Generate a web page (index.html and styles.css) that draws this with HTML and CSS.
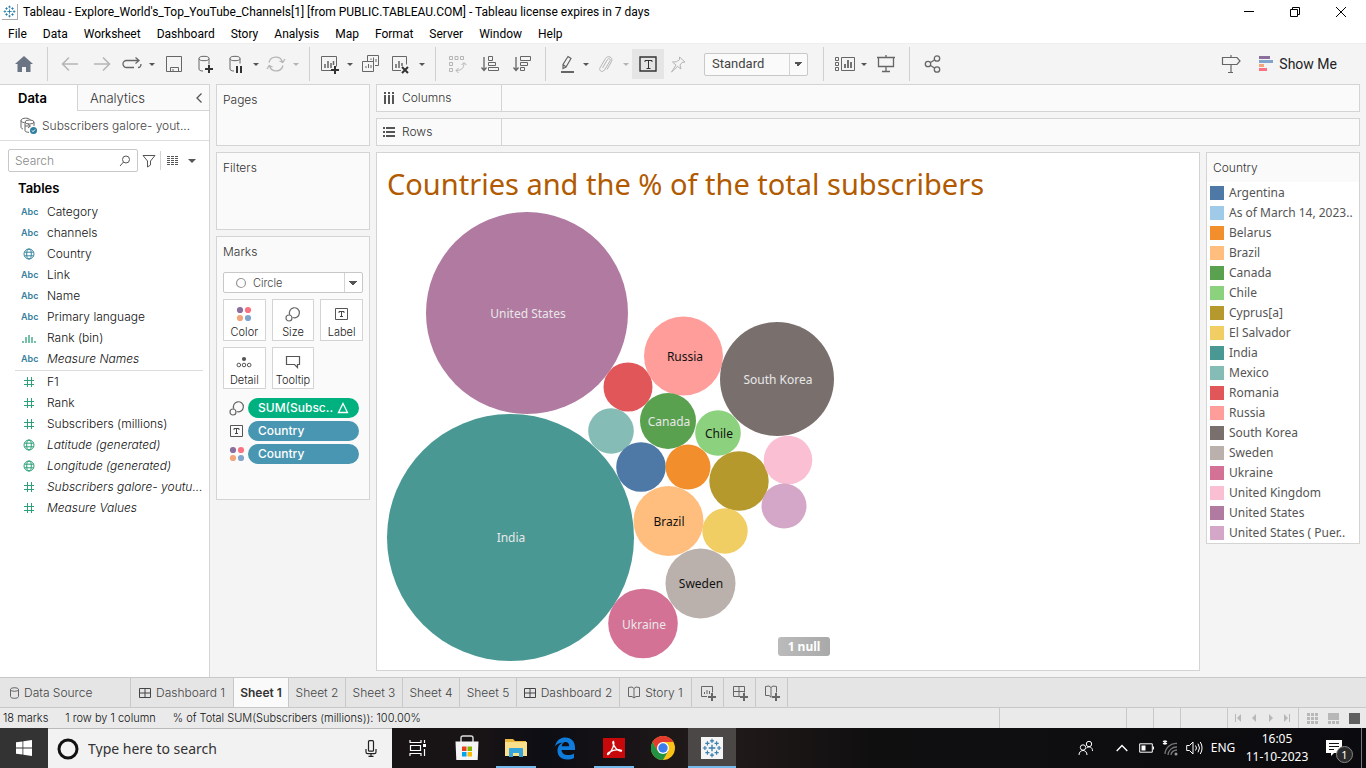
FILE: index.html
```html
<!DOCTYPE html>
<html lang="en">
<head>
<meta charset="utf-8">
<meta name="viewport" content="width=device-width, initial-scale=1">
<title>Tableau - Explore_World's_Top_YouTube_Channels[1]</title>
<link rel="stylesheet" href="styles.css">
</head>
<body>
<svg class="sprite" aria-hidden="true">
  <symbol id="i-tableau" viewBox="0 0 24 24"><g fill="none" stroke="currentColor"><path stroke-width="1.6" d="M12 8v8M8 12h8"/><path stroke-width="1.4" d="M12 1v5M9.5 3.5h5M12 18v5M9.5 20.500h5M3.500 9.500v5M1 12h5M20.500 9.500v5M18 12h5M6.500 4v5M4 6.500h5M17.500 4v5M15 6.500h5M6.500 15v5M4 17.500h5M17.500 15v5M15 17.500h5"/></g></symbol>
  <symbol id="i-globe" viewBox="0 0 12 12"><g fill="none" stroke="currentColor"><circle cx="6" cy="6" r="5"/><ellipse cx="6" cy="6" rx="2.300" ry="5"/><path d="M1.500 4.200h9M1.500 7.800h9"/></g></symbol>
  <symbol id="i-hash" viewBox="0 0 12 12"><path fill="none" stroke="currentColor" d="M4.500 1v10M8.500 1v10M1 4.500h10M1 8.500h10"/></symbol>
  <symbol id="i-bin" viewBox="0 0 14 12"><path fill="none" stroke="currentColor" stroke-width="1.300" d="M1 9v2M4 5v6M7 3v8M10 5v6M13 9v2"/></symbol>
  <symbol id="i-size" viewBox="0 0 16 16"><g fill="none" stroke="#666" stroke-width="1.200"><path d="M4.800 8.800a5 5 0 1 1 3 2.700"/><circle cx="4" cy="12" r="3"/></g></symbol>
  <symbol id="i-label" viewBox="0 0 16 16"><path fill="none" stroke="#555" d="M1.500 2.500h12v11h-12z"/><path fill="none" stroke="#444" d="M5 7V5.500h5V7M7.500 5.500v5M6 10.500h3"/></symbol>
  <symbol id="i-color" viewBox="0 0 16 16"><circle cx="4" cy="4" r="3.100" fill="#8b6f9c"/><circle cx="12" cy="4" r="3.100" fill="#fb7383"/><circle cx="4" cy="12" r="3.100" fill="#f3a67b"/><circle cx="12" cy="12" r="3.100" fill="#82a5cd"/></symbol>
  <symbol id="i-dash" viewBox="0 0 12 12"><path fill="none" stroke="currentColor" d="M.5 1.500h11v9H.5zM6 1.500v9M.5 6h11"/></symbol>
</svg>

<header class="titlebar">
  <svg class="app-icon" viewBox="0 0 24 24"><use href="#i-tableau"/></svg>
  <span class="titlebar-text">Tableau - Explore_World's_Top_YouTube_Channels[1] [from PUBLIC.TABLEAU.COM] - Tableau license expires in 7 days</span>
  <div class="window-controls">
    <button aria-label="Minimize"><svg width="12" height="12"><path d="M1 5.500h10"/></svg></button>
    <button aria-label="Restore"><svg width="12" height="12"><path d="M1.500 3.500h7v7h-7zM3.500 3.500v-2h7v7h-2"/></svg></button>
    <button aria-label="Close"><svg width="12" height="12"><path d="M1 1l10 10M11 1L1 11"/></svg></button>
  </div>
</header>

<nav class="menubar" aria-label="Main menu">
  <button>File</button><button>Data</button><button>Worksheet</button><button>Dashboard</button><button>Story</button><button>Analysis</button><button>Map</button><button>Format</button><button>Server</button><button>Window</button><button>Help</button>
</nav>

<div class="toolbar" role="toolbar" aria-label="Toolbar">
  <button class="tool" aria-label="Start page"><svg viewBox="0 0 24 24"><path fill="#6b7482" stroke="none" d="M12 4l9 8h-2.500v8H14v-5h-4v5H5.500v-8H3z"/></svg></button>
  <span class="sep"></span>
  <button class="tool off" aria-label="Undo"><svg viewBox="0 0 24 24"><path stroke-width="1.500" d="M5 12h15M11 5.500L4.500 12l6.500 6.500"/></svg></button>
  <button class="tool off" aria-label="Redo"><svg viewBox="0 0 24 24"><path stroke-width="1.500" d="M4 12h15M13 5.500l6.500 6.500-6.500 6.500"/></svg></button>
  <button class="tool narrow" aria-label="Replay"><svg viewBox="0 0 24 24"><path stroke-width="1.300" d="M14 15.500H6.500a3.200 3.200 0 0 1 0-7H18M18 15.500c2 0 3-1.500 3-3.500M15.500 5.500l3.500 3-3.500 3"/></svg></button>
  <button class="caret" aria-label="Replay options"></button>
  <button class="tool" aria-label="Save"><svg viewBox="0 0 24 24"><path d="M4.500 4.500h15v15h-15zM8.500 19.500v-4h8v4M11 17v2"/></svg></button>
  <button class="tool" aria-label="New data source"><svg viewBox="0 0 24 24"><ellipse cx="10" cy="6.500" rx="5" ry="2.200"/><path d="M5 6.500v10.500c0 1.200 1.500 2 4 2M15 6.500v6"/><path class="heavy" d="M15 13v8M11 17h8"/></svg></button>
  <button class="tool narrow" aria-label="Pause updates"><svg viewBox="0 0 24 24"><ellipse cx="11" cy="6.500" rx="5" ry="2.200"/><path d="M6 6.500v10.500c0 1.200 1.500 2 4 2M16 6.500v5"/><path class="heavy" d="M13 14v7M17 14v7"/></svg></button>
  <button class="caret" aria-label="Pause options"></button>
  <button class="tool narrow off" aria-label="Run update"><svg viewBox="0 0 24 24"><path stroke-width="1.300" d="M5 10.500a7 7 0 0 1 13.500-.5M19 13.500a7 7 0 0 1-13.500.5M21 7l-2.200 3.500L15.500 9M3 17l2.200-3.500L8.500 15"/></svg></button>
  <button class="caret off" aria-label="Update options"></button>
  <span class="sep"></span>
  <button class="tool narrow" aria-label="New worksheet"><svg viewBox="0 0 24 24"><path d="M13 18.500H3.500v-14h15v10"/><path stroke-width="1.500" d="M7 12v4M10 9v7M13 11v5M15.500 9v4"/><path class="heavy" d="M17 14v8M13 18h8"/></svg></button>
  <button class="caret" aria-label="New options"></button>
  <button class="tool narrow" aria-label="Duplicate"><svg viewBox="0 0 24 24"><path d="M9.500 9V3.500h11v10H17M4.500 9.500h11v10h-11zM13 8V6.500M15.500 10V5.500M18 10V7M8 16v-2M10.500 16v-4M13 16v-3"/></svg></button>
  <button class="tool" aria-label="Clear sheet"><svg viewBox="0 0 24 24"><path d="M13 18.500H4.500v-14h14v8"/><path stroke-width="1.500" d="M8 12v4M11 9v7M14 11v3"/><path class="heavy" d="M14 15l6 6M20 15l-6 6"/></svg></button>
  <button class="caret" aria-label="Clear options"></button>
  <span class="sep"></span>
  <button class="tool off" aria-label="Swap rows and columns"><svg viewBox="0 0 24 24"><path d="M3.500 4.500h3v3h-3zM9 4.500h3v3H9zM14.500 4.500h3v3h-3zM3.500 10.500h3v3h-3zM3.500 16.500h3v3h-3zM10 18.500c5 0 8-2 8-7.500M15.500 13l2.500-2.500 2.500 2.500M12.500 16L10 18.500l2.500 2.500"/></svg></button>
  <button class="tool" aria-label="Sort ascending"><svg viewBox="0 0 24 24"><path stroke-width="1.300" d="M6 5v13M3.500 15.500L6 18.500l2.500-3"/><path d="M10.500 4.500h4v4h-4zM10.500 10.500h7v3h-7zM10.500 15.500h10v3h-10z"/></svg></button>
  <button class="tool" aria-label="Sort descending"><svg viewBox="0 0 24 24"><path stroke-width="1.300" d="M6 5v13M3.500 15.500L6 18.500l2.500-3"/><path d="M10.500 4.500h10v4h-10zM10.500 10.500h7v3h-7zM10.500 15.500h4v3h-4z"/></svg></button>
  <span class="sep"></span>
  <button class="tool narrow" aria-label="Highlight"><svg viewBox="0 0 24 24"><path stroke-width="1.200" d="M14 4.500l3 2-5 8.500-3 1.500v-4zM9 12.500l3 2.500"/><path stroke-width="2" d="M7 20h13"/></svg></button>
  <button class="caret" aria-label="Highlight options"></button>
  <button class="tool narrow off" aria-label="Group members"><svg viewBox="0 0 24 24"><path d="M8.500 16l5-8.500c1-1.800 3.500-.5 2.500 1.500l-5.500 9c-2 3-6 .8-4.500-2.200l5.500-9.300c2-3.500 8-1.500 6 3L13 17.500"/></svg></button>
  <button class="caret off" aria-label="Group options"></button>
  <button class="tool active" aria-label="Show mark labels"><svg viewBox="0 0 24 24"><path stroke="#333" stroke-width="1.400" d="M4 5h16v14H4z"/><path stroke="#333" d="M9 10V8.500h7V10M12.500 8.500v8M10.500 16.500h4"/></svg></button>
  <button class="tool narrow off" aria-label="Fix axes"><svg viewBox="0 0 24 24"><path d="M13.500 5l5.500 5-3 .5-2 2.500 1 4-3.500-2.500-6 5.500 4.500-7-3.500-3 4-.3 3-2z"/></svg></button>
  <select class="fit" aria-label="Fit"><option>Standard</option></select>
  <span class="sep wide"></span>
  <button class="tool narrow" aria-label="Show or hide cards"><svg viewBox="0 0 24 24"><path d="M3.500 5.500h3v3h-3zM3.500 10.500h3v3h-3zM3.500 15.500h3v3h-3zM9.500 5.500h13v13h-13z"/><path stroke-width="1.800" d="M13 12v4M16 8v8M19 10v6"/></svg></button>
  <button class="caret" aria-label="Card options"></button>
  <button class="tool" aria-label="Presentation mode"><svg viewBox="0 0 24 24"><path d="M4.500 6v8.500h15V6M3 5.500h18M12 3v2M12 14.500V19M8 19.500h8" stroke-width="1.300"/></svg></button>
  <span class="sep"></span>
  <button class="tool" aria-label="Share"><svg viewBox="0 0 24 24"><g stroke-width="1.300"><circle cx="8" cy="12" r="2.700"/><circle cx="17" cy="6.500" r="2.700"/><circle cx="17" cy="17.500" r="2.700"/><path d="M10.500 10.500L14.500 8M10.500 13.500l4 2.500"/></g></svg></button>
  <button class="tool guide" aria-label="Data guide"><svg viewBox="0 0 24 24"><path stroke-width="1.200" d="M3.500 5.500H18l3 3.500-3 3.500H3.500zM12 3v2.500M12 12.500V20M9 20.500h5"/></svg></button>
  <button class="show-me"><svg width="14" height="16"><path fill="#8b6f9c" d="M0 0h11v3H0z"/><path fill="#82a5cd" d="M0 4h14v3H0z"/><path fill="#f3a67b" d="M0 8h5v3H0z"/><path fill="#fb7383" d="M0 12h8v3H0z"/></svg>Show Me</button>
</div>

<main class="workspace">
  <aside class="data-pane">
    <div class="pane-tabs">
      <button class="pane-tab current">Data</button>
      <button class="pane-tab">Analytics<svg width="8" height="12"><path d="M6.500 1.500L2 6l4.500 4.500"/></svg></button>
    </div>
    <div class="source">
      <svg width="18" height="18" fill="none" stroke="#666"><path d="M3 12c-1.500-.5-2-1-2-2V3.500C1 .5 10 .5 10 3M1 3.500C1 5 3 5.500 4 5.500"/><ellipse cx="9.500" cy="5" rx="4.500" ry="2"/><path d="M5 5v8.500c0 1 1.500 1.800 4 1.800M14 5v4M5 9h5M8 7l2.500 2L8 11"/><circle cx="13.500" cy="13.500" r="3.500" fill="#2e7ea0" stroke="none"/><path stroke="#fff" d="M12 13.500l1 1.200 2-2.200"/></svg>
      <span>Subscribers galore- yout...</span>
    </div>
    <div class="search-row">
      <label class="search"><input type="text" placeholder="Search" aria-label="Search fields"><svg width="12" height="12" fill="none" stroke="#555"><circle cx="7" cy="4.500" r="3.500"/><path d="M4.500 7L1 11"/></svg></label>
      <button class="bare" aria-label="Filter fields"><svg width="14" height="14" fill="none" stroke="#555"><path d="M1 1.500h12L8.500 7v4l-3 2V7z"/></svg></button>
      <button class="bare view-list" aria-label="View as list"><svg width="13" height="11" fill="none" stroke="#555"><path stroke-dasharray="3 1" d="M0 1.500h12M0 3.500h12M0 5.500h12M0 7.500h12M0 9.500h12"/></svg></button>
      <button class="caret" aria-label="List options"></button>
    </div>
    <h2 class="tables-title">Tables</h2>
    <ul class="fields">
      <li><span class="abc">Abc</span>Category</li>
      <li><span class="abc">Abc</span>channels</li>
      <li><svg class="dim"><use href="#i-globe"/></svg>Country</li>
      <li><span class="abc">Abc</span>Link</li>
      <li><span class="abc">Abc</span>Name</li>
      <li><span class="abc">Abc</span>Primary language</li>
      <li><svg><use href="#i-bin"/></svg>Rank (bin)</li>
      <li class="generated"><span class="abc">Abc</span>Measure Names</li>
    </ul>
    <ul class="fields measures">
      <li><svg><use href="#i-hash"/></svg>F1</li>
      <li><svg><use href="#i-hash"/></svg>Rank</li>
      <li><svg><use href="#i-hash"/></svg>Subscribers (millions)</li>
      <li class="generated"><svg><use href="#i-globe"/></svg>Latitude (generated)</li>
      <li class="generated"><svg><use href="#i-globe"/></svg>Longitude (generated)</li>
      <li class="generated"><svg><use href="#i-hash"/></svg>Subscribers galore- youtu...</li>
      <li class="generated"><svg><use href="#i-hash"/></svg>Measure Values</li>
    </ul>
  </aside>

  <section class="cards">
    <div class="card pages"><h3>Pages</h3></div>
    <div class="card filters"><h3>Filters</h3></div>
    <div class="card marks">
      <h3>Marks</h3>
      <div class="mark-type">
        <svg width="12" height="12"><circle cx="6" cy="6" r="4.500" fill="none" stroke="#999" stroke-width="1.200"/></svg>
        <select aria-label="Mark type"><option>Circle</option></select>
      </div>
      <div class="mark-buttons">
        <button><svg><use href="#i-color"/></svg>Color</button>
        <button><svg><use href="#i-size"/></svg>Size</button>
        <button><svg><use href="#i-label"/></svg>Label</button>
        <button><svg viewBox="0 0 16 16"><circle cx="8" cy="5" r="2.100" fill="#555"/><g fill="none" stroke="#555"><circle cx="2.800" cy="11" r="1.800"/><circle cx="8" cy="11" r="1.800"/><circle cx="13.200" cy="11" r="1.800"/></g></svg>Detail</button>
        <button><svg viewBox="0 0 16 16"><path fill="none" stroke="#555" stroke-width="1.200" d="M1.500 2.500h13v8h-2v3l-3-3h-8z"/></svg>Tooltip</button>
      </div>
      <ul class="pills">
        <li><svg><use href="#i-size"/></svg><button class="pill measure">SUM(Subsc.. <svg width="12" height="12"><path fill="none" stroke="#fff" stroke-width="1.300" d="M6 1.500L10.500 10.500h-9z"/></svg></button></li>
        <li><svg><use href="#i-label"/></svg><button class="pill">Country</button></li>
        <li><svg><use href="#i-color"/></svg><button class="pill">Country</button></li>
      </ul>
    </div>
  </section>

  <section class="sheet">
    <div class="shelf"><div class="shelf-name"><svg width="12" height="12" stroke="#555" stroke-width="2"><path d="M2 0v2M6 0v2M10 0v2M2 3v9M6 3v9M10 3v9"/></svg>Columns</div></div>
    <div class="shelf"><div class="shelf-name"><svg width="12" height="12" stroke="#555" stroke-width="2"><path d="M0 2h2M0 6h2M0 10h2M3 2h9M3 6h9M3 10h9"/></svg>Rows</div></div>
    <div class="sheet-body">
      <div class="view">
        <h1>Countries and the % of the total subscribers</h1>
        <svg class="bubbles" role="img" aria-label="Bubble chart of subscribers by country">
          <circle cx="150" cy="106" r="101" fill="#b07aa1"/>
          <circle cx="133.500" cy="330.500" r="123.500" fill="#499894"/>
          <circle cx="251" cy="180" r="24.500" fill="#e15759"/>
          <circle cx="306.500" cy="149" r="39.500" fill="#ff9d9a"/>
          <circle cx="400" cy="172" r="57" fill="#79706e"/>
          <circle cx="234" cy="224" r="22.800" fill="#86bcb6"/>
          <circle cx="291" cy="214" r="28" fill="#59a14f"/>
          <circle cx="341" cy="226" r="22.800" fill="#8cd17d"/>
          <circle cx="264" cy="260" r="24.800" fill="#4e79a7"/>
          <circle cx="311" cy="260" r="22.500" fill="#f28e2b"/>
          <circle cx="362" cy="274" r="29.700" fill="#b6992d"/>
          <circle cx="291.500" cy="314" r="35" fill="#ffbe7d"/>
          <circle cx="348" cy="324" r="22.700" fill="#f1ce63"/>
          <circle cx="411" cy="253" r="24.300" fill="#fabfd2"/>
          <circle cx="407" cy="299" r="22.500" fill="#d4a6c8"/>
          <circle cx="323.500" cy="376.500" r="35" fill="#bab0ac"/>
          <circle cx="266" cy="416.500" r="34.800" fill="#d37295"/>
          <g class="on-dark">
            <text x="151" y="111">United States</text><text x="134" y="335">India</text><text x="401" y="177">South Korea</text><text x="292" y="219">Canada</text><text x="267" y="422">Ukraine</text>
          </g>
          <g class="on-light">
            <text x="308" y="154">Russia</text><text x="342" y="231">Chile</text><text x="292" y="319">Brazil</text><text x="324" y="381">Sweden</text>
          </g>
        </svg>
        <button class="nulls">1 null</button>
      </div>
      <aside class="legend">
        <h3>Country</h3>
        <ul>
          <li><i class="c1"></i>Argentina</li><li><i class="c2"></i>As of March 14, 2023..</li><li><i class="c3"></i>Belarus</li><li><i class="c4"></i>Brazil</li><li><i class="c5"></i>Canada</li><li><i class="c6"></i>Chile</li><li><i class="c7"></i>Cyprus[a]</li><li><i class="c8"></i>El Salvador</li><li><i class="c9"></i>India</li><li><i class="c10"></i>Mexico</li><li><i class="c11"></i>Romania</li><li><i class="c12"></i>Russia</li><li><i class="c13"></i>South Korea</li><li><i class="c14"></i>Sweden</li><li><i class="c15"></i>Ukraine</li><li><i class="c16"></i>United Kingdom</li><li><i class="c17"></i>United States</li><li><i class="c18"></i>United States ( Puer..</li>
        </ul>
      </aside>
    </div>
  </section>
</main>

<nav class="sheet-tabs" aria-label="Sheets">
  <button class="source-tab"><svg width="9" height="12" fill="none" stroke="#666"><ellipse cx="4.500" cy="2.500" rx="4" ry="1.800"/><path d="M.5 2.500v7c0 2.400 8 2.400 8 0v-7"/></svg>Data Source</button>
  <button class="dash-tab"><svg width="12" height="12"><use href="#i-dash"/></svg>Dashboard 1</button>
  <button class="current">Sheet 1</button>
  <button>Sheet 2</button><button>Sheet 3</button><button>Sheet 4</button><button>Sheet 5</button>
  <button class="dash-tab"><svg width="12" height="12"><use href="#i-dash"/></svg>Dashboard 2</button>
  <button class="story-tab"><svg width="12" height="13" fill="none" stroke="#666"><path d="M.5 1.500L4 1l2 1.500L8 1l3.500.5v9H8l-2 1.500-2-1.500H.5zM6 2.500V12"/></svg>Story 1</button>
  <button class="new-tab" aria-label="New worksheet"><svg width="16" height="16" fill="none" stroke="#666"><path d="M7 11.500H1.500v-10h11v6M4.500 9V7M7 9V5M9.500 9V6"/><path stroke-width="2" d="M12 8v8M8 12h8"/></svg></button>
  <button class="new-tab" aria-label="New dashboard"><svg width="16" height="16" fill="none" stroke="#666"><path d="M8 11.500H1.500v-10h11v6M7 1.500v10M1.500 6.500h11"/><path stroke-width="2" d="M12 8v8M8 12h8"/></svg></button>
  <button class="new-tab" aria-label="New story"><svg width="16" height="16" fill="none" stroke="#666"><path d="M7 12l-2-1.500H1.500v-9L5 1l2 1.500L9 1l3.500.5v6M7 2.500v10"/><path stroke-width="2" d="M12 8v8M8 12h8"/></svg></button>
</nav>

<footer class="statusbar">
  <span>18 marks</span><span>1 row by 1 column</span><span>% of Total SUM(Subscribers (millions)): 100.00%</span>
  <div class="status-cells">
    <div class="cell-user"></div><div class="cell-small"></div><div class="cell-small"></div><div class="cell-mid"></div>
    <div class="cell-nav">
      <button aria-label="First"><svg width="8" height="8"><path d="M0 0h1v8H0zM6 0v8L2 4z"/></svg></button>
      <button aria-label="Previous"><svg width="8" height="8"><path d="M5 0v8L1 4z"/></svg></button>
      <button aria-label="Next"><svg width="8" height="8"><path d="M2 0v8l4-4z"/></svg></button>
      <button aria-label="Last"><svg width="8" height="8"><path d="M1 0v8l4-4zM6 0h1v8H6z"/></svg></button>
    </div>
    <div class="cell-views">
      <button aria-label="Sheet sorter"><svg width="11" height="11"><path d="M0 0h3v3H0zM4 0h3v3H4zM8 0h3v3H8zM0 4h3v3H0zM4 4h3v3H4zM8 4h3v3H8zM0 8h3v3H0zM4 8h3v3H4zM8 8h3v3H8z"/></svg></button>
      <button aria-label="Filmstrip"><svg width="11" height="11"><path d="M0 0h11v7H0zM0 8h3v3H0zM4 8h3v3H4zM8 8h3v3H8z"/></svg></button>
      <button aria-label="Tabs" class="on"><svg width="11" height="11"><path d="M0 0h11v11H0z"/></svg></button>
    </div>
  </div>
</footer>

<div class="taskbar">
  <button class="start" aria-label="Start"><svg width="16" height="16" fill="#fff"><path d="M0 2.300L6.500 1.400v6.200H0zM7.300 1.300L16 0v7.600H7.300zM0 8.400h6.500v6.200L0 13.700zM7.300 8.400H16V16l-8.700-1.300z"/></svg></button>
  <label class="win-search">
    <svg width="22" height="22"><circle cx="11" cy="11" r="9" fill="none" stroke="#111" stroke-width="3"/></svg>
    <input type="text" placeholder="Type here to search" aria-label="Type here to search">
    <svg width="12" height="17" fill="none" stroke="#222" stroke-width="1.200"><rect x="3.500" y=".7" width="5" height="10.500" rx="1"/><path d="M1 9v3c0 1 .5 1.700 1.500 1.700h7c1 0 1.500-.7 1.500-1.700V9M6 14v2.300M3.500 16.300h5"/></svg>
  </label>
  <div class="apps">
    <button aria-label="Task view"><svg width="18" height="16" fill="none" stroke="#fff"><path stroke-width="1.200" d="M1 0v2.500h11V0M1 16v-2.500h11V16M1.500 5.500h10v5h-10zM15.500 0v3M15.500 9v7"/><path fill="#fff" stroke="none" d="M14 4h3v3h-3z"/></svg></button>
    <button aria-label="Store"><svg width="24" height="26"><path d="M6 7V3q0-2 2-2h8q2 0 2 2v4" fill="none" stroke="#ddd" stroke-width="1.400"/><path fill="#f5f5f5" d="M.5 6.500h23l-.8 18.500H1.300z"/><path fill="#e8401c" d="M7 11.500h4.500V16H7z"/><path fill="#7eb900" d="M12.500 11.500H17V16h-4.500z"/><path fill="#00a3ee" d="M7 17h4.500v4.500H7z"/><path fill="#feb800" d="M12.500 17H17v4.500h-4.500z"/></svg></button>
    <button aria-label="File Explorer" class="open"><svg width="22" height="20"><path fill="#e9b83c" d="M0 1h8l2 2h11v15H0z"/><path fill="#fbe08b" d="M0 4h22v14H0z"/><path fill="#35a5dc" d="M4 11q0-1 1-1h12q1 0 1 1v8h-4v-4H8v4H4z"/></svg></button>
    <button aria-label="Edge"><svg width="22" height="23"><path fill="#0f7bdb" d="M1 9.500C2.500 3 6.500.5 11.500.5c6 0 9.500 4.500 9.500 9.700V13H7.500c.3 3.700 3.500 5 6.500 5 2.500 0 4.500-.7 6-1.600v4.600c-2 1.200-4.500 1.600-7 1.600-6 0-9.500-3.600-9.500-9 0-4 2.500-6.700 5.500-8C5 6 2.500 7.500 1 9.500zM7.700 9.200h7.500c0-3-1.500-4.300-3.600-4.300-2.200 0-3.600 1.700-3.900 4.300z"/></svg></button>
    <button aria-label="Acrobat" class="open"><svg width="22" height="20"><path fill="#c8090b" d="M0 0h22v20H0z"/><path fill="none" stroke="#fff" stroke-width="1.300" d="M10.500 3.500c-2 0 .5 6 5 9 3.500 1.500 4-.5 1.500-.7-4-.5-8 .7-11 2.500-2.500 1.500-1.500 3.200 0 1.500 2.500-3 6-9 4.500-12.300z"/></svg></button>
    <button aria-label="Chrome"><svg width="24" height="24"><circle cx="12" cy="12" r="12" fill="#fbc116"/><path fill="#229342" d="M1.600 6A12 12 0 0 0 12 24l5.200-9L6.800 15z"/><path fill="#e33b2e" d="M1.600 6L6.800 15 12 6h10.400A12 12 0 0 0 1.600 6z"/><circle cx="12" cy="12" r="6" fill="#fff"/><circle cx="12" cy="12" r="4.700" fill="#3b7ded"/></svg></button>
    <button aria-label="Tableau" class="open focused"><svg class="tableau-tile" width="22" height="22"><use href="#i-tableau"/></svg></button>
  </div>
  <div class="tray">
    <button class="people" aria-label="People"><svg width="16" height="16"><circle cx="11" cy="4" r="2.700"/><circle cx="5" cy="7.500" r="2.700"/><path d="M1 15c0-6 8-6 8 0M8.500 8c3-2 6-1 6 3"/></svg></button>
    <button aria-label="Show hidden icons"><svg width="12" height="8"><path stroke-width="1.400" d="M.7 7L6 1.500 11.300 7"/></svg></button>
    <button aria-label="Battery"><svg width="15" height="10"><path d="M.7.800h12.600v8.400H.7z"/><path fill="#fff" stroke="none" d="M2.500 2.500h4v5h-4zM14 3.500h1v3h-1z"/></svg></button>
    <button aria-label="Network"><svg width="16" height="16"><path stroke-width="1.100" d="M3 0v5M1 1l4 3M5 1L1 4"/><g stroke="#777" stroke-width="1.300"><path d="M3 14A11 11 0 0 1 15 3.500M6 15a8.500 8.500 0 0 1 9-8M9 15c0-3 3-5 6-5"/></g><circle cx="14" cy="14" r="1.500" fill="#999" stroke="none"/></svg></button>
    <button aria-label="Volume"><svg width="17" height="14"><path d="M.7 4.500h2.800L7 1v12L3.500 9.500H.7zM9.500 4.500q2 2.500 0 5M12 2.700q3 4.300 0 8.600M14.300 1q3.500 6 0 12"/></svg></button>
    <button class="lang">ENG</button>
    <button class="clock"><span>16:05</span><span>11-10-2023</span></button>
    <button class="notify" aria-label="1 notification"><svg width="16" height="16"><path fill="#fff" stroke="none" d="M0 0h16v13H8l-3 3v-3H0z"/><path stroke="#111" d="M3 3.500h10M3 6.500h10M3 9.500h5"/></svg><span class="badge">1</span></button>
  </div>
</div>
</body>
</html>
```
FILE: styles.css
```css
* { box-sizing: border-box; }
html, body { height: 100%; }
body {
  margin: 0;
  display: flex;
  flex-direction: column;
  overflow: hidden;
  background: #f4f4f4;
  color: #333;
  font: 300 12px/16px Inter, Roboto, sans-serif;
}
button, select, input { font: inherit; color: inherit; }
button { margin: 0; padding: 0; border: 0; background: none; white-space: nowrap; }
ul { margin: 0; padding: 0; list-style: none; }
h1, h2, h3 { margin: 0; font-weight: 300; }
svg { flex: none; }
.sprite { position: absolute; width: 0; height: 0; }

.titlebar, .menubar { background: #fff; color: #000; font-family: Roboto, "Open Sans", sans-serif; font-weight: 400; }
.titlebar { display: flex; align-items: center; height: 24px; padding: 0 2px; }
.app-icon { width: 16px; height: 16px; margin-right: 5px; padding: 1px; color: #1f77a8; border-right: 1px solid #aaa; border-bottom: 1px solid #aaa; }
.titlebar-text { flex: 1; white-space: nowrap; }
.window-controls { display: flex; }
.window-controls button { display: flex; align-items: center; justify-content: center; width: 46px; height: 20px; }
.window-controls svg { fill: none; stroke: #000; }
.menubar { display: flex; height: 19px; gap: 16px; padding-left: 8px; }

.toolbar { display: flex; align-items: center; height: 41px; padding: 0 29px 0 8px; border-top: 1px solid #eee; }
.tool { display: flex; align-items: center; justify-content: center; width: 32px; height: 30px; flex: none; }
.tool.narrow { width: 28px; }
.tool svg { width: 24px; height: 24px; fill: none; stroke: #666; }
.tool .heavy { stroke: #333; stroke-width: 2; }
.tool.off svg { stroke: #b5b5b5; }
.tool.active { background: #e5e5e5; }
.sep { width: 1px; height: 34px; margin: 0 6px 0 7px; background: #d0d0d0; flex: none; }
.sep.wide { margin-left: 15px; }
.caret { display: flex; align-items: center; justify-content: center; width: 12px; height: 24px; flex: none; }
.caret::before { content: ""; border: 3px solid transparent; border-top: 3px solid #555; border-bottom: 0; }
.caret.off::before { border-top-color: #b5b5b5; }
.fit, .mark-type { border: 1px solid #c8c8c8; border-radius: 2px; }
.fit, .mark-type select { appearance: none; }
.fit {
  width: 104px; height: 23px; margin-left: 12px; padding: 0 7px; color: #444; font: 400 13px/16px Roboto, sans-serif;
  background: conic-gradient(from -45deg at 50% 100%, #555 90deg, transparent 0) right 5px center / 8px 4px no-repeat, linear-gradient(#d4d4d4, #d4d4d4) right 17px top / 1px 100% no-repeat, #fafafa;
}
.guide { margin-left: auto; margin-right: 12px; }
.show-me { display: flex; align-items: center; gap: 6px; font: 400 14px/16px Roboto, sans-serif; color: #222; }

.workspace { display: flex; flex: 1; min-height: 0; }
.data-pane { width: 210px; flex: none; background: #fff; border: solid #d4d4d4; border-width: 1px 1px 0 0; }
.pane-tabs { display: flex; height: 26px; }
.pane-tab { color: #333; font-size: 13px; }
.pane-tab.current { width: 77px; padding-right: 12px; font-weight: 600; color: #000; }
.pane-tab:last-child { flex: 1; display: flex; align-items: center; justify-content: space-between; padding: 0 6px 0 12px; background: #fafafa; border: solid #d4d4d4; border-width: 0 0 1px 1px; }
.pane-tab svg { fill: none; stroke: #555; stroke-width: 1.3; }
.source { display: flex; align-items: center; gap: 4px; height: 30px; padding-left: 20px; color: #444; border-bottom: 1px solid #ddd; }
.search-row { display: flex; align-items: center; height: 23px; margin: 8px 8px 0; }
.search { display: flex; align-items: center; width: 130px; height: 23px; padding: 0 6px; border: 1px solid #c8c8c8; border-radius: 2px; }
.search input { flex: 1; min-width: 0; padding: 0; border: 0; background: none; outline: 0; }
.search input::placeholder { color: #888; }
.bare { display: flex; padding: 0 4px; }
.view-list { padding: 4px 6px; border-left: 1px solid #d4d4d4; }
.search-row .caret::before { border-width: 4px 4px 0; }
.tables-title { padding: 7px 0 0 18px; font-size: 13px; line-height: 18px; font-weight: 600; color: #000; }
.fields { padding-top: 4px; }
.fields li { display: flex; align-items: center; height: 21px; color: #111; white-space: nowrap; }
.fields li > :first-child { width: 16px; margin: 0 10px 0 21px; font-style: normal; flex: none; }
.fields svg { height: 12px; color: #2ca178; }
.fields svg.dim { color: #3a86a3; }
.abc { color: #3a7f9e; font-size: 9px; font-weight: 600; }
.generated { font-style: italic; }
.measures { margin: 1px 6px 0 15px; padding-top: 0; border-top: 1px solid #ddd; }
.measures li > :first-child { margin-left: 6px; }

.cards { display: flex; flex-direction: column; gap: 6px; width: 154px; margin: 0 6px; flex: none; }
.card, .shelf, .view, .legend { border: 1px solid #d4d4d4; background: #fafafa; }
.card { padding: 7px 6px; }
.card h3, .legend h3 { font-size: 12px; color: #333; }
.pages { height: 62px; }
.filters { height: 78px; }
.marks { height: 264px; }
.mark-type { display: flex; align-items: center; height: 21px; margin-top: 12px; padding-left: 11px; background: #fff; color: #444; font-size: 11px; }
.mark-type select { flex: 1; height: 100%; border: 0; margin-left: 6px; padding: 0; background: conic-gradient(from -45deg at 50% 100%, #555 90deg, transparent 0) right 5px center / 8px 4px no-repeat, linear-gradient(#d4d4d4, #d4d4d4) right 17px top / 1px 100% no-repeat; }
.mark-buttons { display: grid; grid-template-columns: repeat(3, 1fr); gap: 6px; margin-top: 6px; }
.mark-buttons button { display: flex; flex-direction: column; align-items: center; justify-content: flex-end; gap: 2px; height: 42px; border: 1px solid #d4d4d4; background: #fff; font-size: 11px; color: #222; }
.mark-buttons svg, .pills li > svg { width: 16px; height: 16px; }
.pills { display: grid; gap: 3px; margin: 9px 4px 0 6px; }
.pills li { display: flex; align-items: center; gap: 3px; }
.pill { display: flex; align-items: center; justify-content: space-between; flex: 1; height: 20px; padding: 0 10px; border-radius: 10px; background: #4996b2; color: #fff; font-weight: 500; }
.pill.measure { background: #00b180; }

.sheet { display: flex; flex-direction: column; flex: 1; gap: 6px; min-width: 0; padding: 0 6px 6px 0; }
.shelf { height: 28px; flex: none; }
.shelf-name { display: flex; align-items: center; gap: 7px; width: 125px; height: 100%; padding-left: 6px; border-right: 1px solid #d4d4d4; color: #333; }
.sheet-body { display: flex; flex: 1; gap: 6px; min-height: 0; align-items: flex-start; }
.view { position: relative; display: flex; flex-direction: column; flex: 1; align-self: stretch; background: #fff; }
.view h1 { height: 54px; padding: 10px 10px 0; font: 400 29px/42px "Noto Sans", sans-serif; color: #b15a00; white-space: nowrap; }
.bubbles { width: 100%; flex: 1; font: 12px "Noto Sans", sans-serif; text-anchor: middle; }
.on-dark { fill: #e8e8e8; }
.on-light { fill: #111; }
.nulls { position: absolute; left: 401px; bottom: 14px; width: 52px; height: 19px; border-radius: 3px; background: linear-gradient(90deg, #bbb, #a9a9a9); color: #fff; font: 700 12px/18px "Noto Sans", sans-serif; }
.legend { width: 154px; background: #fff; }
.legend h3 { height: 29px; padding: 7px 6px; background: #fafafa; }
.legend ul { padding-top: 1px; }
.legend li { display: flex; align-items: center; height: 20px; gap: 5px; padding-left: 3px; font-family: "Noto Sans", sans-serif; font-weight: 400; color: #555; white-space: nowrap; }
.legend i { width: 14px; height: 14px; }
.c1 { background: #4e79a7; } .c2 { background: #a0cbe8; } .c3 { background: #f28e2b; }
.c4 { background: #ffbe7d; } .c5 { background: #59a14f; } .c6 { background: #8cd17d; }
.c7 { background: #b6992d; } .c8 { background: #f1ce63; } .c9 { background: #499894; }
.c10 { background: #86bcb6; } .c11 { background: #e15759; } .c12 { background: #ff9d9a; }
.c13 { background: #79706e; } .c14 { background: #bab0ac; } .c15 { background: #d37295; }
.c16 { background: #fabfd2; } .c17 { background: #b07aa1; } .c18 { background: #d4a6c8; }

.sheet-tabs { display: flex; height: 31px; background: #e5e5e5; border: solid #c8c8c8; border-width: 1px 0; color: #444; }
.sheet-tabs button { display: flex; align-items: center; justify-content: center; gap: 5px; width: 57px; border-right: 1px solid #c8c8c8; flex: none; }
.sheet-tabs .current { width: 55px; background: #fafafa; color: #333; font-weight: 600; }
.sheet-tabs .source-tab { width: 131px; justify-content: flex-start; padding-left: 10px; }
.sheet-tabs .dash-tab { width: 103px; }
.sheet-tabs .story-tab { width: 72px; }
.sheet-tabs .new-tab { width: 32px; }

.statusbar { display: flex; align-items: center; gap: 17px; height: 20px; padding-left: 3px; background: #eaeaea; color: #111; font-size: 11px; white-space: nowrap; }
.status-cells { display: flex; height: 100%; margin-left: auto; }
.status-cells > div { display: flex; align-items: center; justify-content: space-around; border-left: 1px solid #c8c8c8; }
.status-cells svg { display: block; fill: #b8b8b8; }
.status-cells .on svg { fill: #606060; }
.cell-user { width: 127px; }
.cell-small { width: 27px; }
.cell-mid { width: 47px; }
.cell-nav { width: 71px; padding: 0 3px; }
.cell-views { width: 68px; padding: 0 1px 0 3px; }

.taskbar { display: flex; height: 40px; flex: none; background: linear-gradient(90deg, #181416 0 35%, #0d0d14 40%, #231b1a 52%, #100f10 64%, #0b0b0f); color: #fff; font-family: "Noto Sans", sans-serif; font-weight: 400; }
.start { display: flex; align-items: center; justify-content: center; width: 48px; background: #333; }
.win-search { display: flex; align-items: center; width: 344px; padding: 0 15px 0 9px; background: #f2f2f2; border-top: 1px solid #bbb; color: #333; }
.win-search input { flex: 1; min-width: 0; margin-left: 9px; padding: 0; border: 0; outline: 0; background: none; font-size: 14px; }
.win-search input::placeholder { color: #333; }
.apps { display: flex; gap: 1px; padding-left: 2px; }
.apps button { position: relative; display: flex; align-items: center; justify-content: center; width: 48px; height: 40px; }
.apps .open::after { content: ""; position: absolute; left: 4px; right: 4px; bottom: 0; height: 2px; background: #76b9ed; }
.apps .focused { background: #4b4746; }
.apps .focused::after { left: 0; right: 0; }
.tableau-tile { background: #f5f5f5; color: #3a7fae; padding: 1px; }
.tray { display: flex; align-items: center; margin-left: auto; height: 100%; padding-right: 4px; }
.tray button { display: flex; align-items: center; justify-content: center; width: 24px; height: 100%; }
.tray svg { fill: none; stroke: #fff; }
.tray .people { width: 36px; margin-right: 6px; }
.tray .lang { width: 34px; }
.tray .clock { flex-direction: column; width: 74px; line-height: 18px; }
.tray .notify { position: relative; width: 48px; padding-right: 8px; border-right: 1px solid #777; }
.badge { position: absolute; left: 22px; top: 18px; width: 17px; height: 17px; border: 1px solid #888; border-radius: 50%; background: #2b2b2b; line-height: 15px; text-align: center; font-size: 11px; }
```
